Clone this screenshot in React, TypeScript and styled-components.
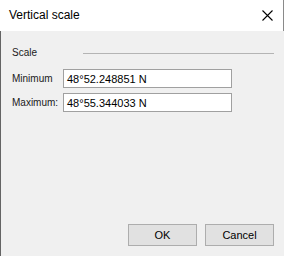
import React from "react";
import styled, { createGlobalStyle } from "styled-components";

const Global = createGlobalStyle`
  html, body {
    margin: 0;
    padding: 0;
    background: #f0f0f0;
  }
`;

const Window = styled.div`
  width: 284px;
  height: 256px;
  display: flex;
  flex-direction: column;
  box-sizing: border-box;
  font-family: "Liberation Sans", Arial, sans-serif;
  color: #000;
  background: #f0f0f0;
`;

const TitleBar = styled.div`
  height: 31px;
  flex: none;
  background: #fff;
  display: flex;
  align-items: center;
  justify-content: space-between;
  padding: 0 10px 1px 9px;
  box-sizing: border-box;
  font-size: 12px;
  border-right: 1px solid #8a8a8a;
`;

const Body = styled.div`
  flex: 1;
  display: flex;
  flex-direction: column;
  border-left: 1px solid #646464;
  padding: 9px 10px 10px 10px;
  font-size: 10px;
`;

const Group = styled.div`
  display: flex;
  align-items: center;
  gap: 46px;
  height: 24px;
  margin-bottom: 5px;
  padding-left: 1px;
  color: #1a1a1a;
`;

const Rule = styled.div`
  flex: 1;
  height: 1px;
  background: #b4b4b4;
  margin-top: 3px;
`;

const Row = styled.div`
  display: grid;
  grid-template-columns: 51px 169px;
  align-items: center;
  height: 19px;
  margin-bottom: 5px;
  padding-left: 1px;
`;

const Label = styled.span`
  color: #1a1a1a;
`;

const Field = styled.div`
  height: 19px;
  box-sizing: border-box;
  background: #fff;
  border: 1px solid #a0a0a0;
  padding: 0 3px;
  display: flex;
  align-items: center;
  font-size: 11px;
`;

const Footer = styled.div`
  margin-top: auto;
  display: flex;
  justify-content: flex-end;
  gap: 8px;
`;

const Button = styled.button`
  width: 69px;
  height: 22px;
  background: #e1e1e1;
  border: 1px solid #adadad;
  font-family: inherit;
  font-size: 11px;
  color: #000;
  padding: 0;
`;

export default function App() {
  return (
    <Window>
      <Global />
      <TitleBar>
        <span>Vertical scale</span>
        <svg width="11" height="11" viewBox="0 0 11 11">
          <path d="M0.5 0.5L10.5 10.5M10.5 0.5L0.5 10.5" stroke="#000" strokeWidth="1.1" />
        </svg>
      </TitleBar>
      <Body>
        <Group>
          <span>Scale</span>
          <Rule />
        </Group>
        <Row>
          <Label>Minimum</Label>
          <Field>48°52.248851 N</Field>
        </Row>
        <Row>
          <Label>Maximum:</Label>
          <Field>48°55.344033 N</Field>
        </Row>
        <Footer>
          <Button>OK</Button>
          <Button>Cancel</Button>
        </Footer>
      </Body>
    </Window>
  );
}
